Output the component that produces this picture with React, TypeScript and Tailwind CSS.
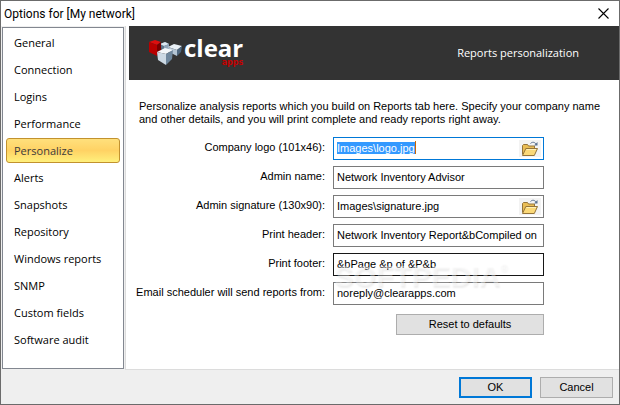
import React, { useEffect, useRef } from 'react';

const sections = [
  'General',
  'Connection',
  'Logins',
  'Performance',
  'Personalize',
  'Alerts',
  'Snapshots',
  'Repository',
  'Windows reports',
  'SNMP',
  'Custom fields',
  'Software audit',
];

const inputBase =
  'block h-[23px] w-full border bg-white px-[3px] pb-[2px] text-[11px] text-black outline-none selection:bg-[#3399ff] selection:text-white';

const CubesLogo = () => (
  <svg width="36" height="28" viewBox="0 0 36 28" aria-hidden="true">
    <path d="M12 5l5-2 4 2v7h-7z" fill="#5d7489" />
    <path d="M12 5l5-2 4 2-5 2z" fill="#dbe7f1" />
    <path d="M16 7l5-2v6h-5z" fill="#8fa3b8" />
    <path d="M20 8l6-3 8 2-5 4z" fill="#e9f0f6" />
    <path d="M20 8l9 3v6l-6-3z" fill="#b4c5d4" />
    <path d="M29 11l5-4-1 6-4 4z" fill="#4f6880" />
    <path d="M1 3l6-2 6 2-4 3z" fill="#dd0f0f" />
    <path d="M1 3l8 3v11l-8-4z" fill="#b80000" />
    <path d="M9 6l4-3v9l-4 5z" fill="#780000" />
    <path d="M9 13l8-4 8 2-7 4z" fill="#f3f7fa" />
    <path d="M9 13l9 2v11l-8-5z" fill="#ccd9e4" />
    <path d="M18 15l7-4-1 9-6 6z" fill="#6f879d" />
  </svg>
);

const FolderIcon = () => (
  <svg width="18" height="16" viewBox="0 0 18 16" aria-hidden="true">
    <path d="M1.5 13.5V4.5l1-1h4l1 1.5h6v3" fill="#e9bd55" stroke="#94743a" />
    <path d="M1.5 14.5L4.8 7.5h11.7l-3.2 7z" fill="#fbd978" stroke="#94743a" />
    <path d="M5.5 8.5h9.5" stroke="#fff0b8" />
    <path d="M9.500 2.500C11 .8 13.500 .8 15 3" fill="none" stroke="#59708f" />
    <path d="M16.500 1v3.500H13z" fill="#59708f" />
  </svg>
);

const BrowseButton = ({ label }: { label: string }) => (
  <button
    type="button"
    aria-label={label}
    className="absolute top-[3px] right-[3px] flex h-[17px] w-[22px] items-center justify-center bg-[#f3f3f3]"
  >
    <FolderIcon />
  </button>
);

interface FieldProps {
  id: string;
  label: string;
  children: React.ReactNode;
}

const Field = ({ id, label, children }: FieldProps) => (
  <>
    <label htmlFor={id} className="text-right leading-[20px] whitespace-nowrap">
      {label}
    </label>
    <div className="relative">{children}</div>
  </>
);

const App: React.FC = () => {
  const logoRef = useRef<HTMLInputElement>(null);

  // The first field opens focused with its path selected
  useEffect(() => {
    logoRef.current?.focus();
    logoRef.current?.select();
  }, []);

  return (
    <div className="flex min-h-screen flex-col border border-[#6b6b6b] bg-white font-['Liberation_Sans',sans-serif] text-[11px] text-black">
      {/* Title bar */}
      <header className="flex h-[25px] shrink-0 items-center justify-between pr-[10px] pl-[3px]">
        <h1 className="font-[Roboto,sans-serif] text-[12px]">Options for [My network]</h1>
        <button type="button" aria-label="Close">
          <svg width="11" height="11" viewBox="0 0 11 11">
            <path d="M.5 .5l10 10M10.500 .5l-10 10" stroke="#000" strokeWidth="1.100" />
          </svg>
        </button>
      </header>

      <div className="flex flex-1">
        {/* Sections list */}
        <div className="flex bg-[#efefef] p-px">
          <nav className="flex w-[122px] flex-col gap-[2px] border border-[#828790] bg-white px-[3px] py-[2px] font-['Open_Sans',sans-serif] text-[11px]">
            {sections.map((name) => (
              <button
                key={name}
                type="button"
                className={
                  name === 'Personalize'
                    ? 'h-[25px] rounded-[3px] border border-[#c2922e] bg-linear-to-b from-[#ffe07c] via-[#ffd264] to-[#fff07c] px-[7px] pt-[2px] text-left text-[#3b3b3b]'
                    : 'h-[25px] border border-transparent px-[7px] pt-[2px] text-left'
                }
              >
                {name}
              </button>
            ))}
          </nav>
        </div>

        <main className="flex-1 border-b border-l border-[#dcdcdc] pl-[3px]">
          <div className="flex h-[54px] items-center justify-between bg-[#333333] pr-[40px] pl-[19px]">
            <div className="flex items-center">
              <CubesLogo />
              <div className="flex flex-col items-end font-bold">
                <span className="font-['Open_Sans',sans-serif] text-[24px] leading-[20px] text-white">clear</span>
                <span className="font-['DejaVu_Sans',sans-serif] text-[8px] leading-[10px] text-[#c40000]">apps</span>
              </div>
            </div>
            <h2 className="font-['Open_Sans',sans-serif] text-[11px] text-white">Reports personalization</h2>
          </div>

          <form className="pt-5 pr-[75px] pl-[2px]">
            <p className="mr-[-72px] pl-2 leading-[13px]">
              Personalize analysis reports which you build on Reports tab here. Specify your company name
              <br />
              and other details, and you will print complete and ready reports right away.
            </p>

            <div className="relative mt-[11px] grid grid-cols-[194px_1fr] gap-x-2 gap-y-[6px]">
              <Field id="logo" label="Company logo (101x46):">
                <input
                  id="logo"
                  ref={logoRef}
                  className={`${inputBase} border-[#0078d7] pr-[26px]`}
                  defaultValue={'Images\\logo.jpg'}
                />
                <span className="pointer-events-none absolute top-[4px] left-[82px] h-[13px] w-px bg-[#cc6600]" />
                <BrowseButton label="Browse for company logo" />
              </Field>
              <Field id="admin" label="Admin name:">
                <input id="admin" className={`${inputBase} border-[#7a7a7a]`} defaultValue="Network Inventory Advisor" />
              </Field>
              <Field id="signature" label="Admin signature (130x90):">
                <input
                  id="signature"
                  className={`${inputBase} border-[#7a7a7a] pr-[26px]`}
                  defaultValue={'Images\\signature.jpg'}
                />
                <BrowseButton label="Browse for admin signature" />
              </Field>
              <Field id="header" label="Print header:">
                <input
                  id="header"
                  className={`${inputBase} border-[#7a7a7a]`}
                  defaultValue="Network Inventory Report&bCompiled on &d"
                />
              </Field>
              <Field id="footer" label="Print footer:">
                <input id="footer" className={`${inputBase} border-[#171717]`} defaultValue="&bPage &p of &P&b" />
              </Field>
              <Field id="sender" label="Email scheduler will send reports from:">
                <input id="sender" className={`${inputBase} border-[#7a7a7a]`} defaultValue="noreply@clearapps.com" />
              </Field>

              {/* Watermark over the lower fields */}
              <div className="pointer-events-none absolute top-[121px] left-[203px] flex text-[29px] leading-[36px] font-bold text-white/40 [text-shadow:1px_2px_2px_rgb(0_0_0/0.07)]">
                SOFTPEDIA
                <span className="text-[10px] leading-[20px]">®</span>
              </div>
            </div>

            <div className="mt-[9px] flex justify-end">
              <button type="button" className="h-[21px] w-[148px] border border-[#adadad] bg-[#e1e1e1] leading-[17px]">
                Reset to defaults
              </button>
            </div>
          </form>
        </main>
      </div>

      {/* Dialog buttons */}
      <footer className="flex h-[34px] shrink-0 items-center justify-end gap-2 bg-[#efefef] pr-[6px]">
        <button type="button" className="h-[21px] w-[73px] border-2 border-[#0078d7] bg-[#e1e1e1] leading-[17px]">
          OK
        </button>
        <button type="button" className="h-[21px] w-[73px] border border-[#adadad] bg-[#e1e1e1] leading-[17px]">
          Cancel
        </button>
      </footer>
    </div>
  );
};

export default App;
